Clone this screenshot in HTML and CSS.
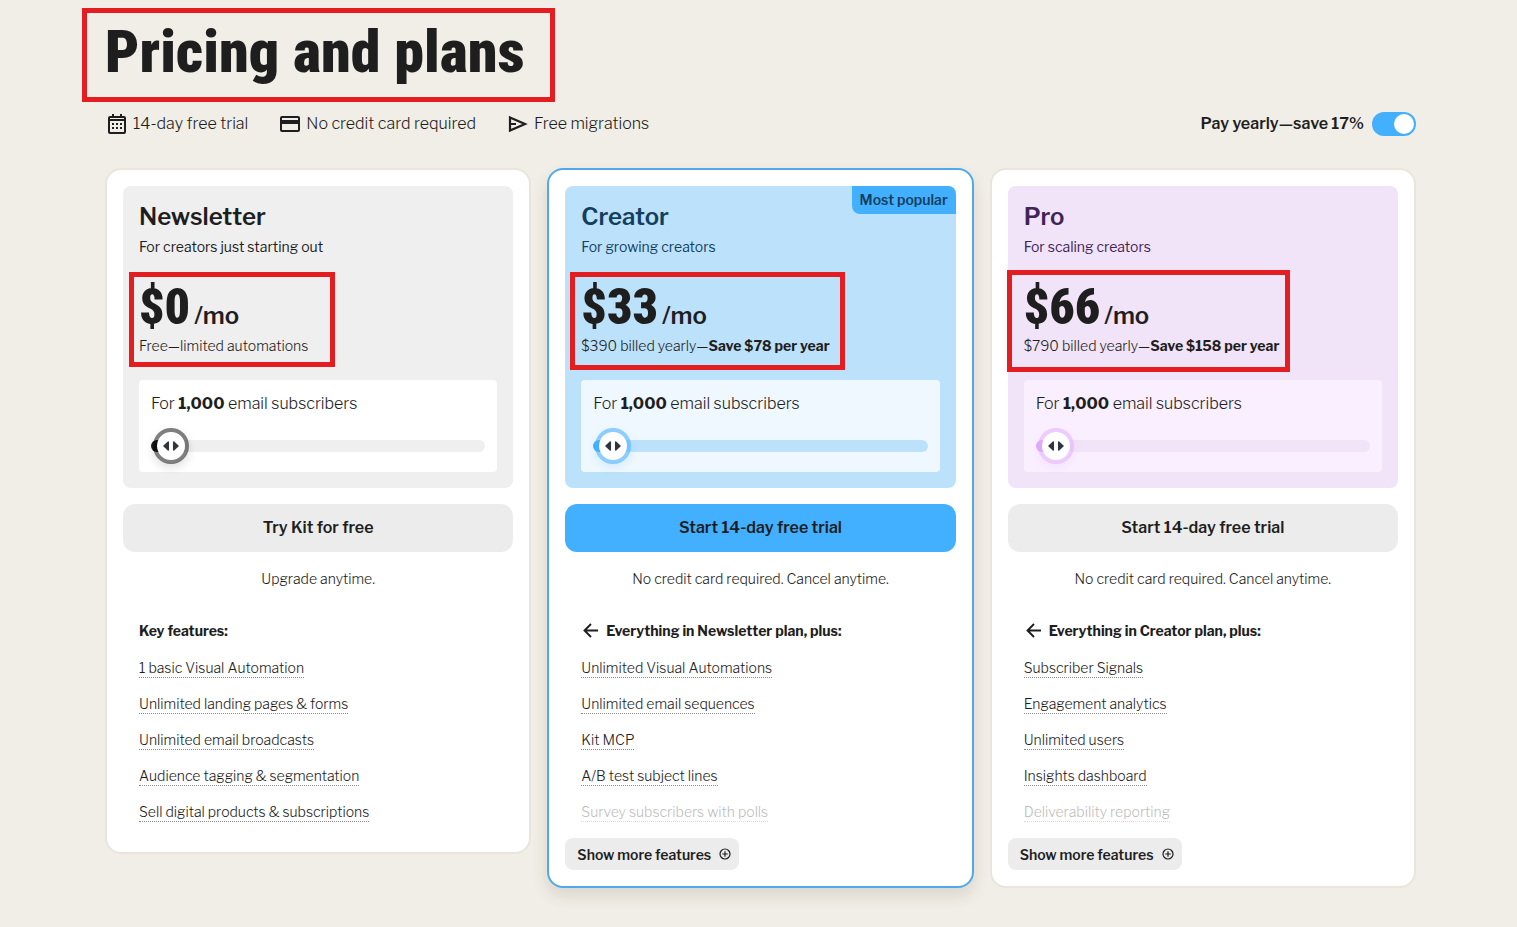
FILE: index.html
```html
<!DOCTYPE html>
<html lang="en">
<head>
<meta charset="utf-8">
<meta name="viewport" content="width=device-width, initial-scale=1">
<title>Pricing and plans</title>
<link rel="stylesheet" href="styles.css">
</head>
<body>
<main class="page">
  <header>
    <div class="marked marked-title"><h1 class="title">Pricing and plans</h1></div>
    <div class="subhead">
      <ul class="perks">
        <li class="perk">
          <svg class="icon" viewBox="0 0 24 24" aria-hidden="true"><path d="M4 8h16M5 5h14a1 1 0 0 1 1 1v14a1 1 0 0 1-1 1H5a1 1 0 0 1-1-1V6a1 1 0 0 1 1-1zM8 2v3M16 2v3" fill="none" stroke="#1e1e1e" stroke-width="2"/><path d="M7 11h2v2H7zM11 11h2v2h-2zM15 11h2v2h-2zM7 15h2v2H7zM11 15h2v2h-2zM15 15h2v2h-2z" fill="#1e1e1e"/></svg>
          14-day free trial
        </li>
        <li class="perk">
          <svg class="icon" viewBox="0 0 24 24" aria-hidden="true"><rect x="3" y="5" width="18" height="14" rx="1" fill="none" stroke="#1e1e1e" stroke-width="2"/><path d="M3 8h18v4H3z" fill="#1e1e1e"/></svg>
          No credit card required
        </li>
        <li class="perk">
          <svg class="icon" viewBox="0 0 24 24" aria-hidden="true"><path d="M4 5.500L19 12 4 18.500zM4 12H10" fill="none" stroke="#1e1e1e" stroke-width="2.200"/></svg>
          Free migrations
        </li>
      </ul>
      <label class="billing">Pay yearly—save 17%<input class="switch" type="checkbox" role="switch" checked></label>
    </div>
  </header>

  <div class="plans">
    <section class="card">
      <div class="hero hero-gray">
        <h2 class="plan">Newsletter</h2>
        <p class="tagline">For creators just starting out</p>
        <div class="marked marked-newsletter">
          <p class="price"><span class="amount">$0</span><span class="period">/mo</span></p>
          <p class="billed">Free—limited automations</p>
        </div>
        <div class="volume">
          <label class="volume-label" for="subs-1">For <b>1,000</b> email subscribers</label>
          <div class="slider">
            <input class="range" id="subs-1" type="range" min="0" max="150" value="1">
            <svg class="grip" viewBox="0 0 16 10" aria-hidden="true"><path d="M5.300 1v8L1 5zM10.700 1v8L15 5z" fill="#30363d" stroke="#30363d" stroke-width="1.500" stroke-linejoin="round"/></svg>
          </div>
        </div>
      </div>
      <button class="cta" type="button">Try Kit for free</button>
      <p class="terms">Upgrade anytime.</p>
      <h3 class="includes">Key features:</h3>
      <ul class="features">
        <li><a href="#f">1 basic Visual Automation</a></li>
        <li><a href="#f">Unlimited landing pages &amp; forms</a></li>
        <li><a href="#f">Unlimited email broadcasts</a></li>
        <li><a href="#f">Audience tagging &amp; segmentation</a></li>
        <li><a href="#f">Sell digital products &amp; subscriptions</a></li>
      </ul>
    </section>

    <section class="card card-popular">
      <div class="hero hero-blue">
        <span class="badge">Most popular</span>
        <h2 class="plan">Creator</h2>
        <p class="tagline">For growing creators</p>
        <div class="marked marked-creator">
          <p class="price"><span class="amount">$33</span><span class="period">/mo</span></p>
          <p class="billed">$390 billed yearly—<b>Save $78 per year</b></p>
        </div>
        <div class="volume">
          <label class="volume-label" for="subs-2">For <b>1,000</b> email subscribers</label>
          <div class="slider">
            <input class="range" id="subs-2" type="range" min="0" max="150" value="1">
            <svg class="grip" viewBox="0 0 16 10" aria-hidden="true"><path d="M5.300 1v8L1 5zM10.700 1v8L15 5z" fill="#30363d" stroke="#30363d" stroke-width="1.500" stroke-linejoin="round"/></svg>
          </div>
        </div>
      </div>
      <button class="cta cta-primary" type="button">Start 14-day free trial</button>
      <p class="terms">No credit card required. Cancel anytime.</p>
      <h3 class="includes"><svg class="back" viewBox="0 0 20 20" aria-hidden="true"><path d="M17 9.500H4M10 3L3.500 9.500 10 16" fill="none" stroke="#1e1e1e" stroke-width="1.900"/></svg>Everything in Newsletter plan, plus:</h3>
      <ul class="features features-faded">
        <li><a href="#f">Unlimited Visual Automations</a></li>
        <li><a href="#f">Unlimited email sequences</a></li>
        <li><a href="#f">Kit MCP</a></li>
        <li><a href="#f">A/B test subject lines</a></li>
        <li><a href="#f">Survey subscribers with polls</a></li>
      </ul>
      <button class="more" type="button">Show more features<svg class="plus" viewBox="0 0 12 12" aria-hidden="true"><circle cx="6" cy="6" r="5" fill="none" stroke="#1e1e1e" stroke-width="1.200"/><path d="M6 3.200v5.600M3.200 6h5.600" stroke="#1e1e1e" stroke-width="1.200"/></svg></button>
    </section>

    <section class="card">
      <div class="hero hero-purple">
        <h2 class="plan">Pro</h2>
        <p class="tagline">For scaling creators</p>
        <div class="marked marked-pro">
          <p class="price"><span class="amount">$66</span><span class="period">/mo</span></p>
          <p class="billed">$790 billed yearly—<b>Save $158 per year</b></p>
        </div>
        <div class="volume">
          <label class="volume-label" for="subs-3">For <b>1,000</b> email subscribers</label>
          <div class="slider">
            <input class="range" id="subs-3" type="range" min="0" max="150" value="1">
            <svg class="grip" viewBox="0 0 16 10" aria-hidden="true"><path d="M5.300 1v8L1 5zM10.700 1v8L15 5z" fill="#30363d" stroke="#30363d" stroke-width="1.500" stroke-linejoin="round"/></svg>
          </div>
        </div>
      </div>
      <button class="cta" type="button">Start 14-day free trial</button>
      <p class="terms">No credit card required. Cancel anytime.</p>
      <h3 class="includes"><svg class="back" viewBox="0 0 20 20" aria-hidden="true"><path d="M17 9.500H4M10 3L3.500 9.500 10 16" fill="none" stroke="#1e1e1e" stroke-width="1.900"/></svg>Everything in Creator plan, plus:</h3>
      <ul class="features features-faded">
        <li><a href="#f">Subscriber Signals</a></li>
        <li><a href="#f">Engagement analytics</a></li>
        <li><a href="#f">Unlimited users</a></li>
        <li><a href="#f">Insights dashboard</a></li>
        <li><a href="#f">Deliverability reporting</a></li>
      </ul>
      <button class="more" type="button">Show more features<svg class="plus" viewBox="0 0 12 12" aria-hidden="true"><circle cx="6" cy="6" r="5" fill="none" stroke="#1e1e1e" stroke-width="1.200"/><path d="M6 3.200v5.600M3.200 6h5.600" stroke="#1e1e1e" stroke-width="1.200"/></svg></button>
    </section>
  </div>
</main>
</body>
</html>
```

FILE: styles.css
```css
*, *::before, *::after { box-sizing: border-box; }
body, h1, h2, h3, p, ul { margin: 0; padding: 0; }
ul { list-style: none; }

body {
  background: #f1eee7;
  color: #1e1e1e;
  font-family: "Libre Franklin", Inter, "Liberation Sans", sans-serif;
  font-size: 14px;
  font-weight: 300;
  line-height: 20px;
}
button { border: 0; color: inherit; font-family: inherit; cursor: pointer; }
b { font-weight: 700; }

.page { padding: 16px 101px 32px 105px; }

/* Highlight frames */
.marked { position: relative; }
.marked::after {
  content: "";
  position: absolute;
  border: 5px solid #e41e20;
  pointer-events: none;
}
.marked-title::after { top: -8px; left: -23px; width: 473px; height: 94px; }
.marked-newsletter::after { top: -15px; left: -10px; width: 206px; height: 95px; }
.marked-creator::after { top: -15px; left: -11px; width: 275px; height: 98px; }
.marked-pro::after { top: -17px; left: -17px; width: 283px; height: 102px; }

.title {
  font-family: "Roboto Condensed", "Open Sans Condensed", Roboto, sans-serif;
  font-size: 60px;
  font-weight: 900;
  line-height: 72px;
  padding-bottom: 24px;
}

.subhead { display: flex; justify-content: space-between; align-items: center; }
.perks { display: flex; gap: 30px; }
.perk {
  display: flex;
  align-items: center;
  gap: 4px;
  font-size: 16px;
  line-height: 24px;
}
.icon { width: 24px; height: 24px; }

.billing {
  display: flex;
  align-items: center;
  gap: 8px;
  font-size: 16px;
  font-weight: 600;
  line-height: 24px;
}
.switch {
  appearance: none;
  display: flex;
  justify-content: flex-end;
  width: 44px;
  height: 24px;
  margin: 0;
  padding: 2px;
  border-radius: 12px;
  background: #43afff;
}
.switch::before {
  content: "";
  width: 20px;
  height: 20px;
  border-radius: 50%;
  background: #fff;
}

.plans {
  display: grid;
  grid-template-columns: repeat(3, 1fr);
  gap: 16px;
  align-items: start;
  margin-top: 32px;
}
.card {
  display: flex;
  flex-direction: column;
  padding: 16px;
  border: 2px solid #e9e5dd;
  border-radius: 16px;
  background: #fff;
}
.card-popular {
  border-color: #50a9ea;
  box-shadow: 0 8px 16px rgba(60, 45, 20, 0.12);
}

.hero {
  position: relative;
  padding: 16px;
  border-radius: 8px;
  background: var(--panel);
}
.hero-gray { --panel: #efefef; --inner: #fff; --ring: rgba(0, 0, 0, 0.5); --fill: #1e1e1e; --track: #efefef; --glow: rgba(0, 0, 0, 0.12); }
.hero-blue { --panel: #bce1fb; --inner: #f0f8ff; --ring: rgba(67, 175, 255, 0.58); --fill: #43afff; --track: #bce1fb; --glow: rgba(67, 175, 255, 0.16); --ink: #133f5f; }
.hero-purple { --panel: #f1e3f8; --inner: #faefff; --ring: rgba(223, 168, 255, 0.5); --fill: #dfa8ff; --track: #f1e3f8; --glow: rgba(223, 168, 255, 0.16); --ink: #412457; }

.badge {
  position: absolute;
  top: 0;
  right: 0;
  padding: 4px 8px;
  border-radius: 0 8px 0 8px;
  background: #43afff;
  color: #133f5f;
  font-weight: 600;
}
.plan { color: var(--ink, inherit); font-size: 24px; font-weight: 600; line-height: 30px; }
.tagline {
  margin: 6px 0 31px;
  color: var(--ink, inherit);
  font-weight: 400;
  line-height: 18px;
}
.price { display: flex; align-items: baseline; gap: 4px; line-height: 40px; }
.amount {
  font-family: "Roboto Condensed", "Open Sans Condensed", Roboto, sans-serif;
  font-size: 50px;
  font-weight: 900;
}
.period { font-size: 24px; font-weight: 600; }

.volume {
  margin-top: 24px;
  padding: 12px 12px 8px;
  border-radius: 4px;
  background: var(--inner);
}
.volume-label { display: block; font-size: 16px; line-height: 24px; }
.slider { position: relative; margin-top: 12px; }
.range {
  appearance: none;
  display: block;
  width: 100%;
  height: 36px;
  margin: 0;
  background: none;
}
.range::-webkit-slider-runnable-track {
  height: 12px;
  border-radius: 6px;
  background: linear-gradient(to right, var(--fill) 20px, var(--track) 20px);
}
.range::-webkit-slider-thumb {
  appearance: none;
  box-sizing: border-box;
  width: 36px;
  height: 36px;
  margin-top: -12px;
  border: 4px solid var(--ring);
  border-radius: 50%;
  background: #fff padding-box;
  box-shadow: 0 4px 10px var(--glow);
}
.grip {
  position: absolute;
  top: 13px;
  left: 12px;
  width: 16px;
  height: 10px;
  pointer-events: none;
}

.cta {
  height: 48px;
  margin-top: 16px;
  padding: 0 16px 2px;
  border-radius: 12px;
  background: #ececec;
  font-size: 16px;
  font-weight: 600;
}
.cta-primary { background: #43afff; }
.terms { margin-top: 16px; line-height: 22px; text-align: center; }

.includes {
  display: flex;
  align-items: center;
  gap: 5px;
  margin: 28px 16px 14px;
  font-size: 14px;
  font-weight: 700;
  line-height: 26px;
}
.back { width: 20px; height: 20px; }

.features { display: grid; gap: 16px; padding: 0 16px 14px; }
.features-faded { padding-bottom: 16px; }
.features a {
  padding-bottom: 1px;
  color: inherit;
  text-decoration: none;
  border-bottom: 1px dotted #8a8a8a;
}
.features-faded li:last-child { opacity: 0.3; }

.more {
  display: flex;
  align-items: center;
  align-self: flex-start;
  gap: 8px;
  height: 32px;
  padding: 0 8px 0 12px;
  border-radius: 8px;
  background: #ececec;
  font-size: 14px;
  font-weight: 600;
}
.plus { width: 12px; height: 12px; }
```
